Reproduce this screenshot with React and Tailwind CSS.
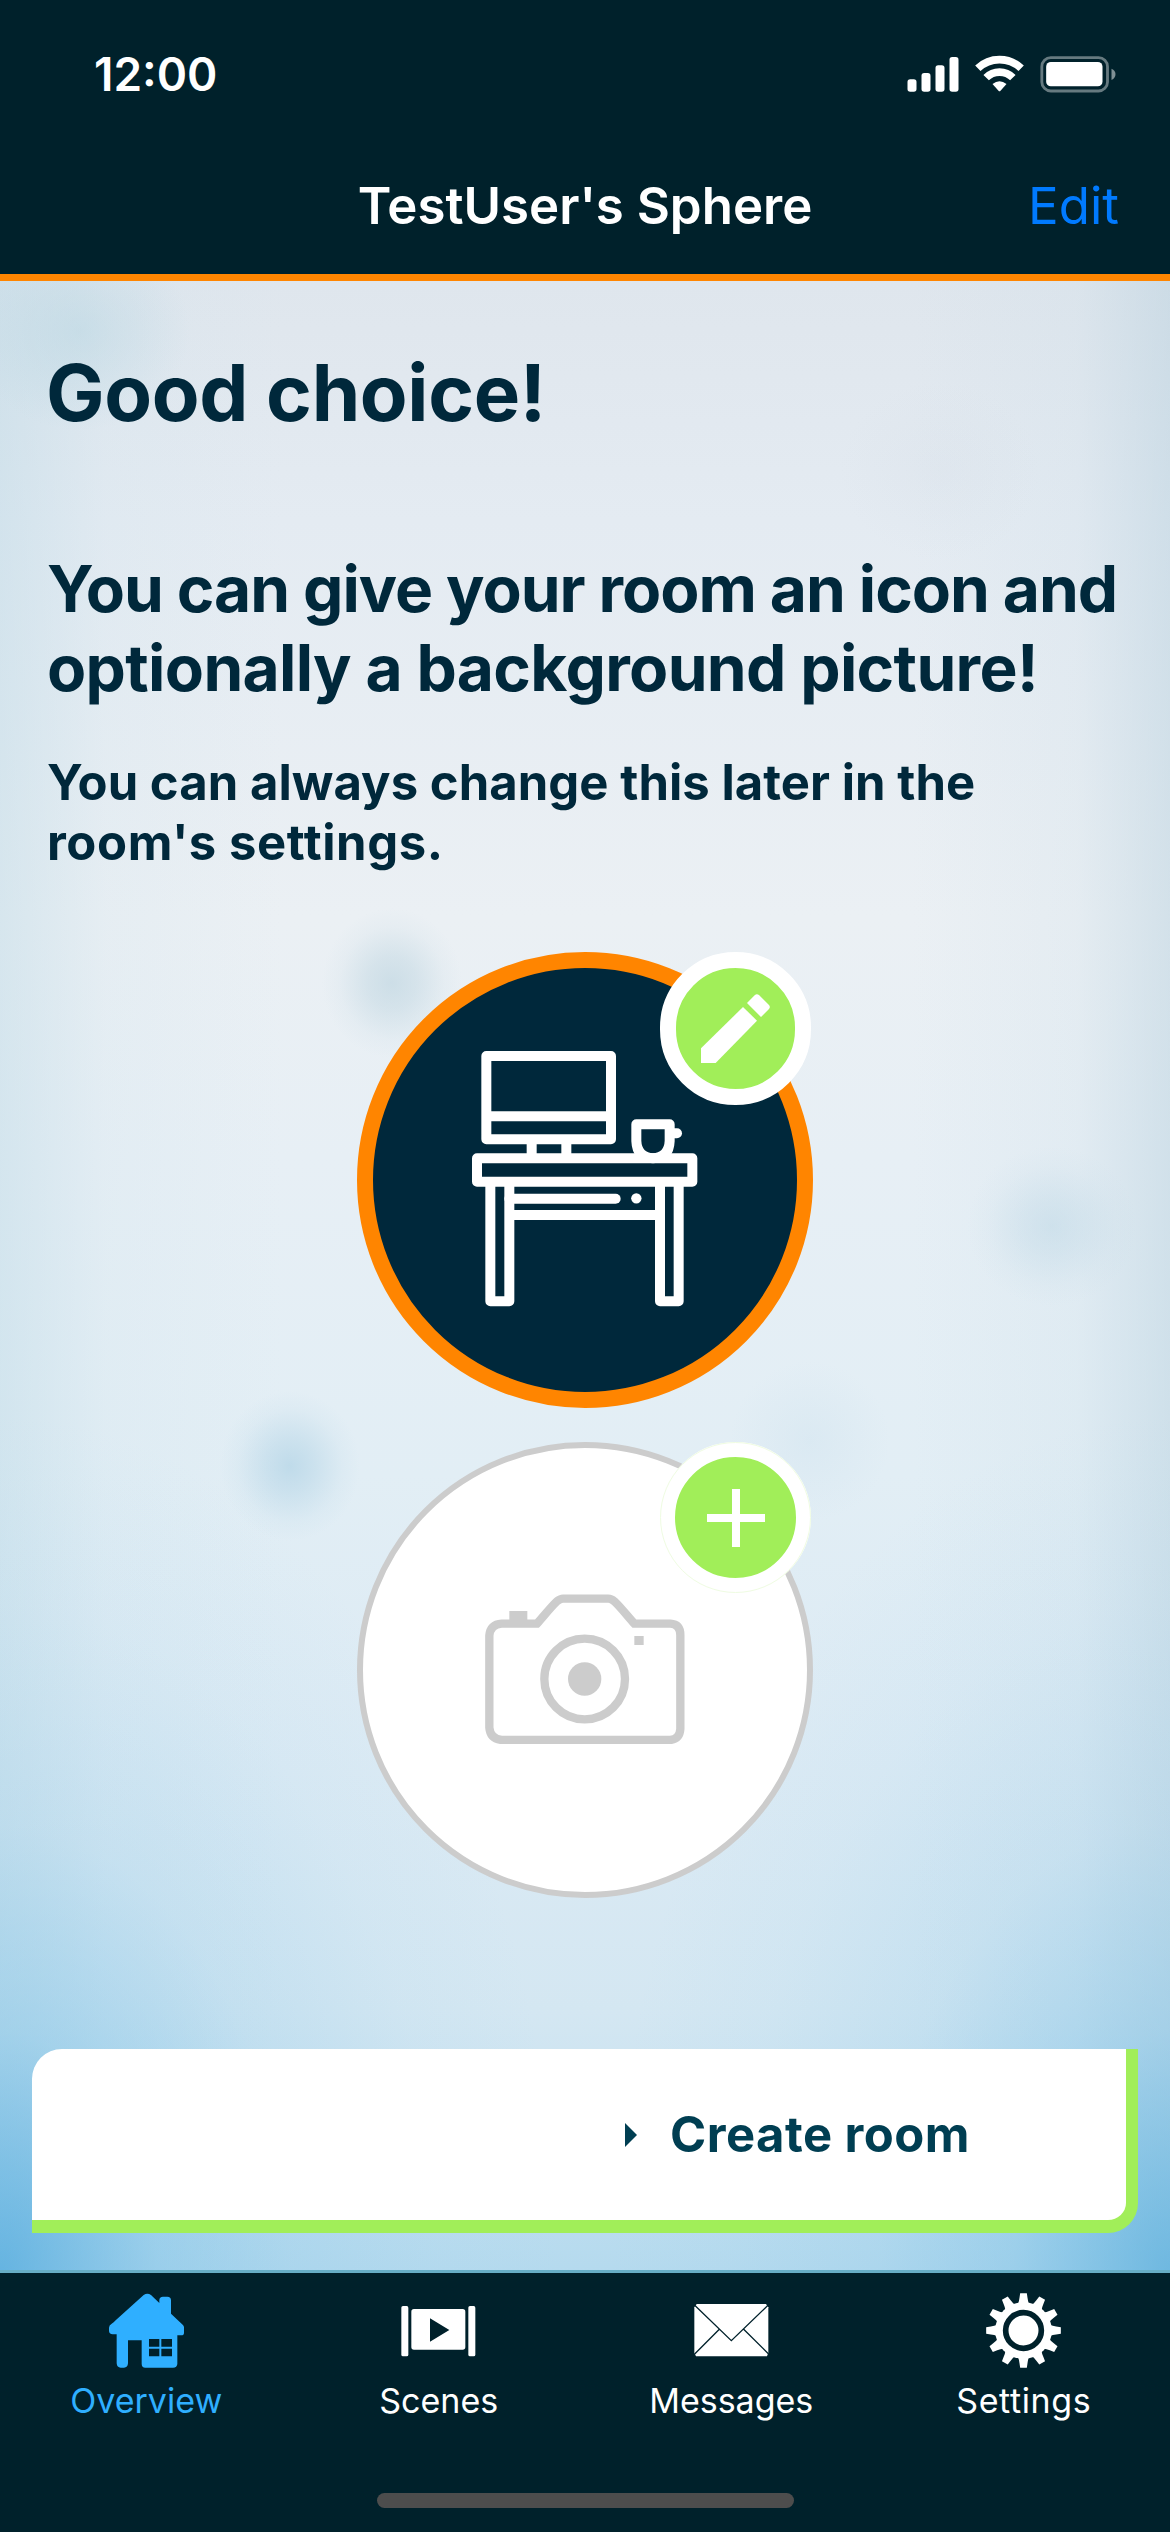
import React from "react";

function StatusIcons() {
  return (
    <svg className="h-[38px] w-[209px]" viewBox="50 44 626 114" fill="none">
      <g fill="#fff">
        <rect x="51" y="117" width="27" height="37" rx="8" />
        <rect x="93" y="98" width="27" height="56" rx="8" />
        <rect x="135" y="75" width="27" height="79" rx="8" />
        <rect x="177" y="50" width="27" height="104" rx="8" />
      </g>
      <g stroke="#fff" strokeWidth="23">
        <path d="M262 84 A94 94 0 0 1 392 84" />
        <path d="M287 112 A56 56 0 0 1 367 112" />
      </g>
      <path d="M306 131 Q327 114 348 131 L330 151 Q327 154 324 151 Z" fill="#fff" />
      <rect x="454" y="52" width="197" height="100" rx="27" stroke="#667a80" strokeWidth="8.5" />
      <rect x="467" y="65" width="169" height="73" rx="14" fill="#fff" />
      <path d="M663 85 Q675 90 675 101 Q675 113 663 119 Z" fill="#7f9095" />
    </svg>
  );
}

function DeskIcon() {
  return (
    <svg className="h-[256px] w-[226px]" viewBox="395 336 678 768" fill="none" stroke="#fff" strokeWidth="30" strokeLinejoin="round">
      <rect x="438" y="351" width="374" height="250" />
      <path d="M438 532 H812" />
      <path d="M574 601 V658 M678 601 V658" />
      <rect x="410" y="658" width="646" height="70" />
      <path d="M888 556 H988 V606 Q986 656 938 658 Q890 656 888 606 Z" />
      <path d="M996 583 H1010" strokeLinecap="round" />
      <path d="M450 728 V1087 H507 V728 M959 728 V1087 H1015 V728" />
      <path d="M507 828 H959" />
      <path d="M507 779 H826" strokeLinecap="round" />
      <circle cx="888" cy="778" r="15.500" fill="#fff" stroke="none" />
    </svg>
  );
}

function PencilIcon() {
  return (
    <svg className="h-[69px] w-[69px]" viewBox="1086 163 207 207" fill="#fff">
      <path d="M1086 326 L1212 202 L1254 243 L1130 370 H1086 Z" />
      <path d="M1224 190 L1247 167 Q1253 161 1260 166 L1290 196 Q1295 202 1290 208 L1266 232 Z" />
    </svg>
  );
}

function PlusIcon() {
  return (
    <svg className="h-[58px] w-[58px]" viewBox="0 0 58 58" fill="#fff">
      <rect x="25" y="0" width="8" height="58" />
      <rect x="0" y="25" width="58" height="8" />
    </svg>
  );
}

function CameraIcon() {
  return (
    <svg className="h-[150px] w-[200px]" viewBox="434 525 600 450" fill="none" stroke="#ccc" strokeWidth="25">
      <path d="M484 614 H590 C610 592 630 566 650 547 Q660 539 668 539 H804 Q813 539 822 547 C842 566 862 592 882 614 H990 Q1020 616 1020 648 V930 Q1018 960 990 963 H484 Q450 960 447 926 V650 Q450 616 484 614 Z" />
      <circle cx="733" cy="780" r="121" />
      <circle cx="733" cy="780" r="50" fill="#ccc" stroke="none" />
      <rect x="507" y="576" width="54" height="30" fill="#ccc" stroke="none" />
      <rect x="882" y="651" width="28" height="27" fill="#ccc" stroke="none" />
    </svg>
  );
}

function HomeIcon() {
  return (
    <svg className="h-[75px] w-[75px]" viewBox="24 25 225 225">
      <path
        fillRule="evenodd"
        fill="#2fafff"
        d="M128 31 Q139 23 150 31 L175 55 V47 Q175 36 186 36 H199 Q210 36 210 47 V87 L245 120 Q249 124 249 128 V144 Q249 152 241 152 H229 V238 Q228 249 216 249 H133 Q122 249 122 237 V167 H81 V236 Q80 249 69 249 H59 Q48 249 47 236 V149 H35 Q24 148 24 138 V129 Q24 122 32 117 Q38 114 44 107 Z M144 163 H175 V186 H144 Z M181 163 H213 V186 H181 Z M144 192 H175 V215 H144 Z M181 192 H213 V215 H181 Z"
      />
    </svg>
  );
}

function ScenesIcon() {
  return (
    <svg className="h-[75px] w-[75px]" viewBox="905 25 225 225" fill="#fff">
      <rect x="906" y="64" width="21" height="151" rx="5" />
      <rect x="1107" y="64" width="21" height="151" rx="5" />
      <path fillRule="evenodd" d="M944 73 H1090 Q1098 73 1098 81 V187 Q1098 195 1090 195 H944 Q936 195 936 187 V81 Q936 73 944 73 Z M992 101 V171 L1050 136 Z" />
    </svg>
  );
}

function MessagesIcon() {
  return (
    <svg className="h-[75px] w-[75px]" viewBox="38 25 225 225">
      <path d="M46 58 H254 L261 68 V204 L257 215 H44 L39 204 V68 Z" fill="#fff" />
      <path d="M40 62 L150 168 L260 62 M114 134 L40 208 M187 134 L261 207" fill="none" stroke="#00212b" strokeWidth="4" />
    </svg>
  );
}

function SettingsIcon() {
  const teeth = Array.from({ length: 12 }, (_, i) => i * 30);
  return (
    <svg className="h-[75px] w-[75px]" viewBox="913.500 23.500 225 225" fill="#fff">
      <circle cx="1026" cy="136" r="85" />
      {teeth.map((a) => (
        <path key={a} d="M1009 58 Q1013 48 1014 38 L1016 24 H1036 L1038 38 Q1039 48 1043 58 Z" transform={`rotate(${a} 1026 136)`} />
      ))}
      <circle cx="1026" cy="136" r="53.500" fill="none" stroke="#00212b" strokeWidth="17" />
    </svg>
  );
}

const tabs = [
  { label: "Overview", Icon: HomeIcon, color: "text-[#2fafff]" },
  { label: "Scenes", Icon: ScenesIcon, color: "text-white" },
  { label: "Messages", Icon: MessagesIcon, color: "text-white" },
  { label: "Settings", Icon: SettingsIcon, color: "text-white tracking-[0.6px]" },
];

const backdrop =
  "bg-[radial-gradient(70px_75px_at_392px_702px,rgba(185,210,222,0.6),rgba(185,210,222,0.42)_35%,rgba(185,210,222,0.1)_75%,transparent),radial-gradient(70px_75px_at_290px_1185px,rgba(170,207,227,0.62),rgba(170,207,227,0.4)_35%,rgba(170,207,227,0.1)_75%,transparent),radial-gradient(85px_80px_at_1052px_945px,rgba(180,210,226,0.42),rgba(180,210,226,0.28)_35%,rgba(180,210,226,0.07)_75%,transparent),radial-gradient(110px_100px_at_80px_50px,rgba(175,210,223,0.42),rgba(175,210,223,0.24)_45%,transparent),radial-gradient(80px_80px_at_810px_1160px,rgba(200,222,236,0.3),transparent),radial-gradient(100px_90px_at_940px_190px,rgba(205,214,224,0.16),transparent),radial-gradient(560px_860px_at_0px_1992px,rgba(75,168,222,0.76),rgba(110,188,230,0.42)_28%,rgba(130,196,232,0.2)_52%,rgba(150,206,236,0.07)_78%,transparent),radial-gradient(560px_860px_at_1170px_1992px,rgba(80,172,222,0.7),rgba(110,188,230,0.38)_28%,rgba(130,196,232,0.18)_52%,rgba(150,206,236,0.07)_78%,transparent),linear-gradient(to_right,rgba(186,216,229,0.42),rgba(205,226,236,0.18)_9%,transparent_24%,transparent_78%,rgba(200,219,230,0.18)_92%,rgba(182,207,221,0.45)),linear-gradient(to_bottom,#dfe6ed_0%,#e4ebf2_12%,#ebf0f4_32%,#e7eff5_44%,#e2eef5_60%,#dbeaf4_75%,#d4e7f2_87%,#cbe3f1_91%,#b5daee_100%)]";

export default function App() {
  return (
    <div className="flex h-[2532px] w-[1170px] flex-col overflow-hidden bg-[#00212b] font-['Inter',sans-serif]">
      <header className="h-[281px] shrink-0 border-b-[7px] border-[#ff8500] bg-[#00212b]">
        <div className="flex h-[138px] items-start justify-between pl-[94px] pr-[54px] text-white">
          <span className="pt-[46px] text-[46px] leading-[56px] font-semibold">12:00</span>
          <span className="pt-[55px]">
            <StatusIcons />
          </span>
        </div>
        <div className="grid h-[136px] grid-cols-[1fr_auto_1fr] items-center pr-[51px] pl-[51px] leading-[60px]">
          <span />
          <h1 className="text-[51px] font-semibold text-white">TestUser's Sphere</h1>
          <button className="justify-self-end text-[51px] text-[#007aff]">Edit</button>
        </div>
      </header>

      <main className={`flex h-[1992px] shrink-0 flex-col border-b-[3px] border-[#67aec6] pt-[67px] text-[#00283b] ${backdrop}`}>
        <h2 className="pl-[46px] text-[78px] leading-[90px] font-bold tracking-[-0.35px]">Good choice!</h2>
        <p className="mt-[111px] pl-[47px] text-[64px] leading-[79px] font-bold whitespace-nowrap">
          <span className="block tracking-[-1.05px]">You can give your room an icon and</span>
          <span className="block tracking-[-0.65px]">optionally a background picture!</span>
        </p>
        <p className="mt-[46px] pl-[47px] text-[49px] leading-[60px] font-bold whitespace-nowrap">
          <span className="block tracking-[0.06px]">You can always change this later in the</span>
          <span className="block tracking-[0.6px]">room's settings.</span>
        </p>

        <div className="mt-[79px] flex flex-col items-center gap-[34px]">
          <div className="relative flex size-[456px] justify-center rounded-full border-[16px] border-[#ff8500] bg-[#00283b] pt-[83px]">
            <DeskIcon />
            <div className="absolute -top-[16px] -right-[14px] flex h-[153px] w-[151px] items-center justify-center rounded-full border-16 border-white bg-[#a1ee59]">
              <PencilIcon />
            </div>
          </div>
          <div className="relative flex size-[456px] justify-center rounded-full border-[6px] border-[#ccc] bg-white pt-[146px]">
            <CameraIcon />
            <div className="absolute -top-[6px] -right-[4px] flex size-[151px] items-center justify-center rounded-full border-[15px] border-white bg-[#a1ee59] outline-1 -outline-offset-1 outline-[#effce2]">
              <PlusIcon />
            </div>
          </div>
        </div>

        <button className="mt-auto mr-[32px] mb-[37px] ml-[32px] flex h-[184px] shrink-0 items-center justify-end gap-[33px] rounded-tl-[30px] rounded-br-[30px] border-r-[12px] border-b-[13px] border-[#a1ee59] bg-white pr-[156px] text-[#003e52]">
          <svg className="h-[24px] w-[12px]" viewBox="0 0 12 24" fill="currentColor">
            <path d="M0 0 L12 12 L0 24 Z" />
          </svg>
          <span className="text-[49px] leading-[60px] font-bold tracking-[0.45px]">Create room</span>
        </button>
      </main>

      <nav className="flex h-[259px] shrink-0 flex-col items-center bg-[#00212b]">
        <div className="grid h-[220px] w-full grid-cols-4 pt-[20px]">
          {tabs.map(({ label, Icon, color }) => (
            <div key={label} className={`flex flex-col items-center gap-[12px] text-[34px] leading-[42px] ${color}`}>
              <Icon />
              <span>{label}</span>
            </div>
          ))}
        </div>
        <div className="h-[15px] w-[417px] rounded-full bg-[#4d4d4d]" />
      </nav>
    </div>
  );
}
